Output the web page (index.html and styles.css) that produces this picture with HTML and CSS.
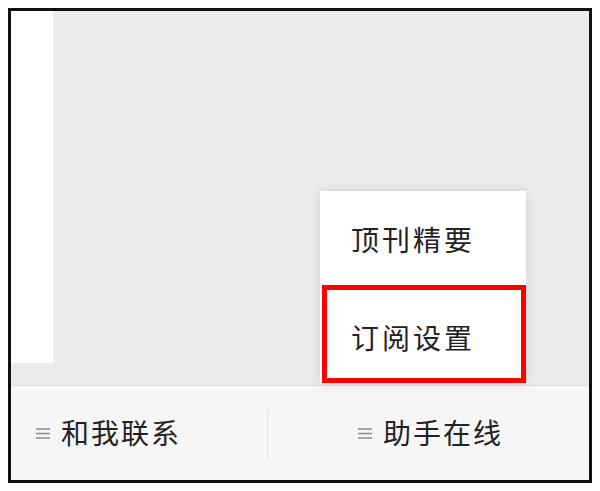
FILE: index.html
```html
<!DOCTYPE html>
<html lang="zh">
<head>
<meta charset="utf-8">
<link rel="stylesheet" href="styles.css">
</head>
<body>
<div class="frame">
  <div class="content">
    <div class="strip"></div>
    <div class="main"></div>
  </div>
  <div class="bar">
    <div class="tab tab-left">
      <svg class="hamb" width="14" height="11" viewBox="0 0 14 11"><path d="M0 1h14M0 5.5h14M0 10h14" stroke="#8a8a8a" stroke-width="1.4"/></svg>
      <span>和我联系</span>
    </div>
    <div class="divider"></div>
    <div class="tab tab-right">
      <svg class="hamb" width="14" height="11" viewBox="0 0 14 11"><path d="M0 1h14M0 5.5h14M0 10h14" stroke="#8a8a8a" stroke-width="1.4"/></svg>
      <span>助手在线</span>
    </div>
  </div>
  <div class="menu">
    <div class="item">顶刊精要</div>
    <div class="item item-hl">订阅设置</div>
  </div>
</div>
</body>
</html>
```
FILE: styles.css
```css
html, body {
  margin: 0;
  padding: 0;
  background: #ffffff;
}
body {
  font-family: "Noto Sans CJK SC", "Noto Sans", sans-serif;
  color: #222222;
}
.frame {
  position: relative;
  margin: 8px 0 0 8px;
  width: 584px;
  height: 475px;
  box-sizing: border-box;
  border: 3px solid #111111;
  display: flex;
  flex-direction: column;
  overflow: hidden;
}
.content {
  height: 374px;
  background: #ececec;
  display: flex;
  align-items: flex-start;
}
.strip {
  width: 42px;
  height: 352px;
  background: #ffffff;
}
.main {
  flex: 1;
}
.bar {
  flex: 1;
  border-top: 1px solid #dedede;
  background: #f6f6f6;
  display: flex;
  align-items: center;
}
.tab {
  display: flex;
  align-items: center;
  gap: 11px;
  font-size: 28px;
  letter-spacing: 2px;
  color: #222222;
  height: 100%;
}
.tab span {
  position: relative;
  top: -1px;
}
.tab-left {
  width: 256px;
  padding-left: 25px;
  box-sizing: border-box;
}
.tab-right {
  flex: 1;
  justify-content: center;
  padding-left: 4px;
}
.hamb {
  flex: none;
}
.divider {
  width: 1px;
  height: 49px;
  background: #e2e2e2;
  margin-top: 2px;
}
.menu {
  position: absolute;
  left: 309px;
  top: 180px;
  width: 206px;
  height: 192px;
  background: #ffffff;
  box-shadow: 0 0 12px rgba(0, 0, 0, 0.12);
  display: flex;
  flex-direction: column;
}
.item {
  height: 94px;
  box-sizing: border-box;
  padding-left: 31px;
  padding-top: 2px;
  display: flex;
  align-items: center;
  font-size: 28px;
  letter-spacing: 3px;
  color: #222222;
}
.item-hl {
  height: 98px;
  margin-left: 2px;
  border: 5px solid #ff0000;
  padding-left: 24px;
  padding-top: 6px;
}
```
